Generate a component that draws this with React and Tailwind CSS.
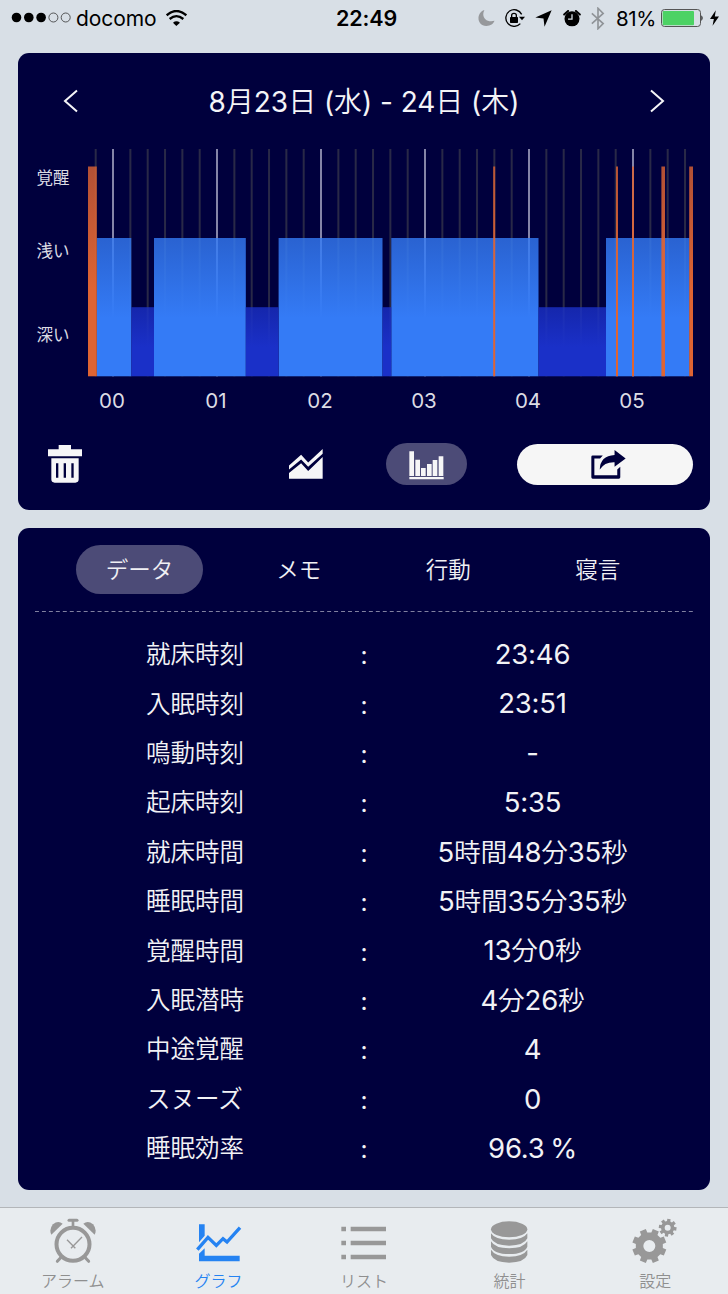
import React from "react";

const HOURS = ["00", "01", "02", "03", "04", "05"];

/* x and width in chart units; the chart is 605 x 228 */
const LIGHT = [
  [8.8, 34.5],
  [66, 91.8],
  [190.6, 103.9],
  [303.3, 147.2],
  [518, 83.5],
];
const DEEP = [
  [43.3, 22.7],
  [157.8, 32.8],
  [294.5, 8.8],
  [450.5, 67.5],
];
const AWAKE = [
  [0, 8.8],
  [405.2, 2],
  [528, 2],
  [544, 2],
  [573.4, 3.6],
  [601.2, 3.8],
];

const ROWS = [
  ["就床時刻", "23:46"],
  ["入眠時刻", "23:51"],
  ["鳴動時刻", "-"],
  ["起床時刻", "5:35"],
  ["就床時間", "5時間48分35秒"],
  ["睡眠時間", "5時間35分35秒"],
  ["覚醒時間", "13分0秒"],
  ["入眠潜時", "4分26秒"],
  ["中途覚醒", "4"],
  ["スヌーズ", "0"],
  ["睡眠効率", "96.3 %"],
];

function gearPath(cx, cy, outer, inner, hole, teeth, offset) {
  const step = (Math.PI * 2) / teeth;
  const pts = [];
  for (let i = 0; i < teeth; i++) {
    const a = offset + i * step;
    [
      [-0.31, inner],
      [-0.24, outer],
      [0.24, outer],
      [0.31, inner],
    ].forEach(([t, r]) => {
      pts.push(`${(cx + r * Math.cos(a + t * step)).toFixed(1)} ${(cy + r * Math.sin(a + t * step)).toFixed(1)}`);
    });
  }
  return `M${pts.join("L")}ZM${cx - hole} ${cy}a${hole} ${hole} 0 1 0 ${hole * 2} 0a${hole} ${hole} 0 1 0 ${-hole * 2} 0Z`;
}

function StatusBar() {
  return (
    <div className="flex h-[53px] items-start">
      <div className="grid h-9 w-full grid-cols-[336px_61px_1fr] items-center">
        <div className="flex items-center pl-[11px]">
          <svg className="h-3 w-[62px]" viewBox="0 0 62 12">
            <circle cx="5.5" cy="5.5" r="4.8" />
            <circle cx="17.8" cy="5.5" r="4.8" />
            <circle cx="30.1" cy="5.5" r="4.8" />
            <circle cx="42.4" cy="5.5" r="4.5" fill="none" stroke="#333" strokeWidth="0.8" />
            <circle cx="54.7" cy="5.5" r="4.5" fill="none" stroke="#333" strokeWidth="0.8" />
          </svg>
          <span className="ml-[3px] w-[80px] whitespace-nowrap pt-[2px] text-[21px] leading-[34px] tracking-[-0.1px]">docomo</span>
          <svg className="ml-[10px] h-4 w-[21px]" viewBox="498 27 63 48">
            <path d="M529 75L519 65Q529 57 540 65Z" />
            <path d="M509 54Q529 37 550 54M500 43Q529 17 559 43" fill="none" stroke="#000" strokeWidth="7" />
          </svg>
        </div>
        <div className="whitespace-nowrap pt-px text-center text-[21.5px] font-semibold leading-[35px] tracking-[-0.1px]">22:49</div>
        <div className="flex items-center pl-[81px]">
          <svg className="h-[16px] w-[17px]" viewBox="341 30 51 49" fill="#96989b">
            <path d="M360 30C335 38 335 78 366 79C379 79 388 72 391 63C366 70 349 51 360 30Z" />
          </svg>
          <svg className="ml-[10px] h-[18px] w-[20px]" viewBox="424 26 60 54">
            <path d="M474 42A25 25 0 1 0 470 70" fill="none" stroke="#000" strokeWidth="4" />
            <path d="M466 49H484L475 60Z" />
            <rect x="439" y="50" width="24" height="18" rx="2" />
            <path d="M444 51V45Q444 39 451 39Q458 39 458 45V51" fill="none" stroke="#000" strokeWidth="4" />
          </svg>
          <svg className="ml-[10px] h-[17px] w-[17px]" viewBox="516 30 50 50">
            <path d="M565 31L544 79L541 55L517 52Z" />
          </svg>
          <svg className="ml-[11px] h-[17px] w-[18px]" viewBox="598 28 52 52">
            <circle cx="624" cy="55" r="23" />
            <path d="M600 42L612 31M648 42L636 31" stroke="#000" strokeWidth="6" strokeLinecap="round" />
            <path d="M624 41V56H612" stroke="#d8dfe6" strokeWidth="4" fill="none" />
          </svg>
          <svg className="ml-[10px] h-[23px] w-[14px]" viewBox="680 18 42 71" fill="none" stroke="#8f9397" strokeWidth="5">
            <path d="M682 38L717 69L701 85V22L717 38L682 69" />
          </svg>
          <span className="ml-[11px] w-[40px] whitespace-nowrap pt-[2px] text-[20.5px] leading-[34px] tracking-[-0.4px]">81%</span>
          <svg className="ml-[5px] h-[18px] w-[43px]" viewBox="891 27 129 54">
            <rect x="892.5" y="28.5" width="117" height="51" rx="9" fill="none" stroke="#555" strokeWidth="3" />
            <rect x="896" y="33" width="94" height="43" rx="3" fill="#4cd264" />
            <path d="M1012 46Q1020 54 1012 63Z" fill="#222" />
          </svg>
          <svg className="ml-[6px] h-4 w-[9px]" viewBox="1037 30 28 48">
            <path d="M1055 30L1037 57H1049L1045 78L1065 49H1052Z" />
          </svg>
        </div>
      </div>
    </div>
  );
}

function Chart() {
  const minor = Array.from({ length: 35 }, (_, i) => i).filter((i) => i % 6 !== 1);
  return (
    <svg className="h-[228px] w-[605px]" viewBox="0 0 605 228">
      <defs>
        <linearGradient id="light" x1="0" y1="0" x2="0" y2="1">
          <stop offset="0" stopColor="#347bf6" stopOpacity="0.8" />
          <stop offset="0.58" stopColor="#347bf6" />
        </linearGradient>
        <linearGradient id="deep" x1="0" y1="0" x2="0" y2="1">
          <stop offset="0" stopColor="#1a30c8" stopOpacity="0.8" />
          <stop offset="0.58" stopColor="#1a30c8" />
        </linearGradient>
        <linearGradient id="awake" x1="0" y1="0" x2="0" y2="1">
          <stop offset="0" stopColor="#de6433" stopOpacity="0.8" />
          <stop offset="0.58" stopColor="#de6433" />
        </linearGradient>
      </defs>
      {minor.map((i) => (
        <rect key={i} x={6.7 + i * 17.333} y="0" width="2" height="227.3" fill="#292947" />
      ))}
      {HOURS.map((h, i) => (
        <rect key={h} x={24 + i * 104} y="0" width="2" height="227.3" fill="#8585a8" />
      ))}
      {LIGHT.map(([x, w]) => (
        <rect key={x} x={x} y="89" width={w} height="138.3" fill="url(#light)" />
      ))}
      {DEEP.map(([x, w]) => (
        <rect key={x} x={x} y="158.2" width={w} height="69.1" fill="url(#deep)" />
      ))}
      {AWAKE.map(([x, w]) => (
        <rect key={x} x={x} y="17.5" width={w} height="209.8" fill="url(#awake)" />
      ))}
    </svg>
  );
}

function GraphPanel() {
  return (
    <section className="mx-[18px] flex h-[457px] flex-col rounded-[11px] bg-[#00003d]">
      <header className="flex h-24 items-center justify-between px-[45px]">
        <svg className="h-6 w-[15px]" viewBox="0 0 15 24" fill="none" stroke="#f4f4f7" strokeWidth="2">
          <path d="M14 1.5L2 12L14 22.5" />
        </svg>
        <h1 className="whitespace-nowrap pt-px text-[28px] font-normal tracking-[-0.05px]">
          8<b className="font-[350]">月</b>23<b className="font-[350]">日</b> (<b className="font-[350]">水</b>) - 24
          <b className="font-[350]">日</b> (<b className="font-[350]">木</b>)
        </h1>
        <svg className="h-6 w-[15px]" viewBox="0 0 15 24" fill="none" stroke="#f4f4f7" strokeWidth="2">
          <path d="M1 1.5L13 12L1 22.5" />
        </svg>
      </header>
      <div className="flex">
        <div className="flex w-[70px] flex-col pl-[18.5px] pt-[17px] text-[16.5px] leading-6 text-[#dcdce4]">
          <span>覚醒</span>
          <span className="mt-[49px]">浅い</span>
          <span className="mt-[60px]">深い</span>
        </div>
        <Chart />
      </div>
      <div className="grid w-[666px] grid-cols-6 pl-[42px] pt-[9px] text-center text-[20.5px] leading-[30px] text-[#dcdce4]">
        {HOURS.map((h) => (
          <span key={h}>{h}</span>
        ))}
      </div>
      <div className="mt-[23px] flex h-[50px] items-center pl-[30px]">
        <svg className="h-[38px] w-[34px]" viewBox="84 45 102 114" fill="#f6f6f7">
          <path d="M116 45H153V58H186V79H84V58H116Z" />
          <path
            fillRule="evenodd"
            d="M94 85H176V148Q176 158 166 158H104Q94 158 94 148ZM108 100V143H115V100ZM131 100V143H138V100ZM154 100V143H161V100Z"
          />
        </svg>
        <svg className="ml-[207px] h-[30px] w-[34px]" viewBox="807 57 101 89" fill="#f6f6f7">
          <path d="M807 106L843 74L864 97L907 57V71L864 110L843 88L807 118Z" />
          <path d="M807 128L843 99L864 122L907 81V145H807Z" />
        </svg>
        <div className="ml-[63px] flex h-[42px] w-[81px] items-center justify-center rounded-full bg-[#4c4b77]">
          <svg className="mt-[2px] h-[29px] w-[35px]" viewBox="117 63 105 87" fill="#f6f6f7">
            <path d="M118 64h14v74h-14zM136 89h14v49h-14zM153 114h14v24h-14zM171 102h14v36h-14zM188 90h14v48h-14zM206 79h14v59h-14zM118 141h103v7h-103z" />
          </svg>
        </div>
        <div className="ml-[50px] flex h-[41px] w-[176px] items-center justify-center rounded-full bg-[#f6f6f6]">
          <svg className="ml-[6px] h-[29px] w-[35px]" viewBox="663 59 104 86" fill="#00003d">
            <path d="M698 75H668Q664 75 664 79V140Q664 144 668 144H746Q750 144 750 140V109L741 117V134H673V84H690Z" />
            <path d="M689 117Q690 77 733 74V59L766 84L733 109V95Q703 94 689 117Z" />
          </svg>
        </div>
      </div>
    </section>
  );
}

function DataPanel() {
  return (
    <section className="mx-[18px] mt-[18px] h-[662px] rounded-[11px] bg-[#00003d] px-[17px]">
      <nav className="flex h-[83px] items-start pl-[41px] pt-[17px] text-[22.5px] font-[350] leading-[49px] text-[#f0f0f4]">
        <div className="mr-[21px] h-[49px] w-[127px] rounded-full bg-[#4c4b77] text-center">データ</div>
        <div className="w-[149.5px] text-center">メモ</div>
        <div className="w-[149.5px] text-center">行動</div>
        <div className="w-[149.5px] text-center">寝言</div>
      </nav>
      <svg className="block h-[2px] w-[658px]" viewBox="0 0 658 2">
        <path d="M0 0.5H658" stroke="#8080a0" strokeWidth="1" strokeDasharray="3.96 2.996" />
      </svg>
      <div className="pt-[17px] text-[#f2f2f5]">
        {ROWS.map(([label, value]) => (
          <div key={label} className="grid h-[49.4px] grid-cols-[111px_98px_240px_97px_1fr] items-center whitespace-nowrap">
            <span className="col-start-2 text-[24.5px] font-[350]">{label}</span>
            <span className="pt-[2px] text-center text-[24.5px]">:</span>
            <span className="col-start-4 flex items-baseline justify-center text-[27.5px] tracking-[-0.2px] [word-spacing:-2px]">
              {value.split(/([時間分秒]+)/).map((part, i) => (
                <span key={i} className={i % 2 ? "text-[26.7px] font-[350]" : "whitespace-pre"}>
                  {part}
                </span>
              ))}
            </span>
          </div>
        ))}
      </div>
    </section>
  );
}

function AlarmIcon() {
  return (
    <svg className="h-[46px] w-[48px]" viewBox="147 115 144 138" fill="none" stroke="#989898">
      <circle cx="219" cy="194" r="49.5" strokeWidth="12" />
      <path d="M207 121.5H231" strokeWidth="9" strokeLinecap="round" />
      <path d="M219 123V141" strokeWidth="8" />
      <path d="M182 234L172 245M256 234L266 245" strokeWidth="9" strokeLinecap="round" />
      <path d="M246 172L213 206M201 180L226 206" strokeWidth="4" />
      <path d="M188 132Q174 121 159 134Q146 149 154 165Z" fill="#989898" stroke="none" />
      <path d="M250 132Q264 121 279 134Q292 149 284 165Z" fill="#989898" stroke="none" />
    </svg>
  );
}

function TabBar() {
  const gears = gearPath(857, 199, 52, 41, 18, 8, Math.PI / 8) + gearPath(912, 144, 27, 20, 9, 8, 0.15);
  const tabs = [
    ["アラーム", <AlarmIcon key="a" />],
    [
      "グラフ",
      <svg key="g" className="h-[46px] w-[48px]" viewBox="583 115 144 138" fill="#2583f2">
        <path d="M598 134H615V168L598 188ZM598 222L615 206V228H720V245H598Z" />
        <path d="M593 210L625 173L650 197L670 177L682 187L721 144" fill="none" stroke="#2583f2" strokeWidth="10" />
      </svg>,
    ],
    [
      "リスト",
      <svg key="l" className="h-[46px] w-[48px]" viewBox="0 0 144 138" fill="#989898">
        <path d="M4 26h14v14H4zM32 26h106v14H32zM4 68h14v14H4zM32 68h106v14H32zM4 110h14v14H4zM32 110h106v14H32z" />
      </svg>,
    ],
    [
      "統計",
      <svg key="s" className="h-[46px] w-[48px]" viewBox="365 115 144 138" fill="#989898">
        <ellipse cx="434.500" cy="149" rx="54.500" ry="24" />
        <path d="M380 161Q392 180 434.500 180Q477 180 489 161V176Q480 197 434.500 198Q389 197 380 176Z" />
        <path d="M380 185Q392 206 434.500 206Q477 206 489 185V201Q480 223 434.500 223Q389 223 380 201Z" />
        <path d="M380 210Q392 230 434.500 231Q477 230 489 210V226Q480 248 434.500 249Q389 248 380 226Z" />
      </svg>,
    ],
    [
      "設定",
      <svg key="c" className="h-[46px] w-[48px]" viewBox="802 115 144 138" fill="#989898">
        <path d={gears} fillRule="evenodd" />
      </svg>,
    ],
  ];
  return (
    <footer className="mt-[17px] grid h-[87px] grid-cols-5 border-t border-[#b3b6b9] bg-[#e8ecef] pt-[10px]">
      {tabs.map(([label, icon], i) => (
        <div
          key={label}
          className={`flex flex-col items-center text-[16px] font-[350] leading-6 ${i === 1 ? "text-[#2583f2]" : "text-[#8f8f8f]"}`}
        >
          {icon}
          <span className="mt-[5px]">{label}</span>
        </div>
      ))}
    </footer>
  );
}

export default function App() {
  return (
    <div className="h-[1294px] w-[728px] overflow-hidden bg-[#d8dfe6] font-['Inter','Noto_Sans_CJK_JP',sans-serif] text-black">
      <StatusBar />
      <div className="text-[#f4f4f7]">
        <GraphPanel />
        <DataPanel />
      </div>
      <TabBar />
    </div>
  );
}
